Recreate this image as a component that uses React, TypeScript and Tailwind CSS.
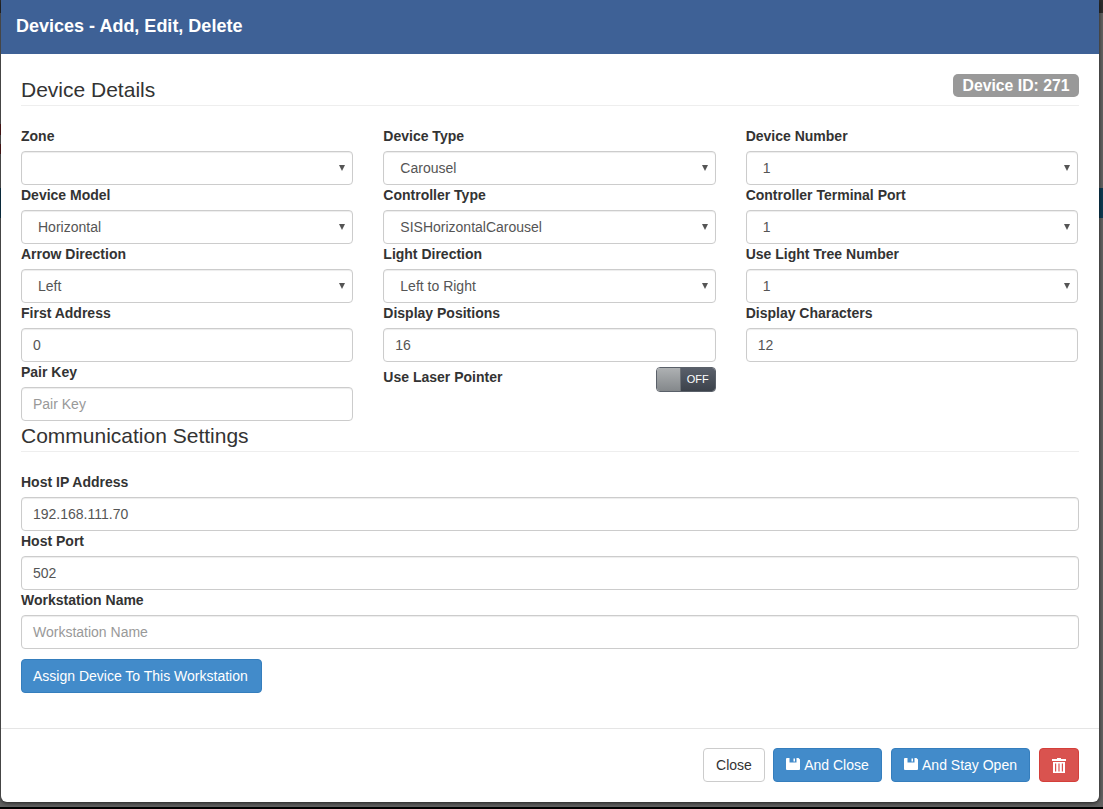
const labelCls = 'block h-[25px] text-[14px] font-bold leading-[20px] text-[#333]';
const controlCls =
  'flex h-[34px] w-full items-center rounded border border-[#ccc] bg-white text-[14px] text-[#555] shadow-[inset_0_1px_1px_rgba(0,0,0,0.075)]';

function SelectField({ label, value }: { label: string; value?: string }) {
  return (
    <div>
      <label className={labelCls}>{label}</label>
      <div className={`${controlCls} justify-between pl-4 pr-[7px]`}>
        <span>{value}</span>
        <svg width="6" height="6" viewBox="0 0 6 6" fill="#555">
          <path d="M0 0h6L3 6z" />
        </svg>
      </div>
    </div>
  );
}

function InputField({ label, value, placeholder }: { label: string; value?: string; placeholder?: string }) {
  return (
    <div>
      <label className={labelCls}>{label}</label>
      <div className={`${controlCls} pl-[11px] pr-3`}>
        {value ? <span>{value}</span> : <span className="text-[#999]">{placeholder}</span>}
      </div>
    </div>
  );
}

function FloppyIcon() {
  return (
    <svg width="14" height="12" viewBox="0 0 14 12" fill="currentColor" className="mb-[3px] shrink-0">
      <path d="M1 0h11.500L14 1.500V11a1 1 0 0 1-1 1H1a1 1 0 0 1-1-1V1a1 1 0 0 1 1-1zM3.500 0v4.500h7V0zM7.500 0.500v3H9v-3z" fillRule="evenodd" />
    </svg>
  );
}

function TrashIcon() {
  return (
    <svg width="14" height="15" viewBox="0 0 14 15" fill="currentColor">
      <path d="M5 0h4v1h5v2H0V1h5zM1 4h12v11H1zM3 5.500v8h1.200v-8zM6.400 5.500v8h1.200v-8zM9.800 5.500v8H11v-8z" fillRule="evenodd" />
    </svg>
  );
}

function App() {
  return (
    <div className="relative h-[809px] w-[1103px] overflow-hidden bg-[#626262] font-['Liberation_Sans',Arial,sans-serif]">
      {/* page behind the dialog, only its edges show */}
      <div className="absolute inset-x-0 top-0 h-[13px] bg-[#2e2e2e]" />
      <div className="absolute inset-x-0 top-[188px] h-[30px] bg-[#0d3b52]" />
      <div className="absolute left-0 top-[124px] h-[11px] w-px bg-[#5c1c1c]" />
      <div className="absolute left-0 top-[144px] h-[10px] w-px bg-[#5c1c1c]" />
      <div className="absolute inset-x-0 bottom-0 h-[2px] bg-black" />

      <div className="relative ml-px flex h-[802px] w-[1098px] flex-col overflow-hidden rounded-b-md bg-white shadow-[0_1px_4px_rgba(0,0,0,0.7)]">
        <div className="flex h-[54px] items-center bg-[#3e6196] pb-[2px] pl-[15px] text-[18px] font-bold text-white">
          Devices - Add, Edit, Delete
        </div>

        <div className="flex-1 px-5">
          <div className="mt-[20px] flex h-[32px] items-start justify-between border-b border-[#eee]">
            <h3 className="text-[21px] leading-[32px] text-[#333]">Device Details</h3>
            <span className="w-[126px] rounded-[5px] bg-[#999] text-center text-[15.75px] font-bold leading-[23px] text-white">
              Device ID: 271
            </span>
          </div>

          <div className="mt-[20px] grid grid-cols-3 gap-x-[30px] gap-y-0 pr-px">
            <SelectField label="Zone" />
            <SelectField label="Device Type" value="Carousel" />
            <SelectField label="Device Number" value="1" />
            <SelectField label="Device Model" value="Horizontal" />
            <SelectField label="Controller Type" value="SISHorizontalCarousel" />
            <SelectField label="Controller Terminal Port" value="1" />
            <SelectField label="Arrow Direction" value="Left" />
            <SelectField label="Light Direction" value="Left to Right" />
            <SelectField label="Use Light Tree Number" value="1" />
            <InputField label="First Address" value="0" />
            <InputField label="Display Positions" value="16" />
            <InputField label="Display Characters" value="12" />
            <InputField label="Pair Key" placeholder="Pair Key" />
            <div className="flex items-start justify-between pt-[5px]">
              <span className="text-[14px] font-bold leading-[20px] text-[#333]">Use Laser Pointer</span>
              <div className="flex h-[25px] w-[60px] overflow-hidden rounded border border-[#5a6069]">
                <span className="w-[24px] border-r border-[#6d7176] bg-gradient-to-b from-[#aeb1b3] to-[#84888b]" />
                <span className="flex flex-1 items-center justify-center bg-gradient-to-b from-[#5a606b] to-[#3c424b] text-[11px] text-white">
                  OFF
                </span>
              </div>
            </div>
          </div>

          <h3 className="h-[30px] text-[21px] leading-[30px] text-[#333]">Communication Settings</h3>
          <div className="border-b border-[#eee]" />

          <div className="mt-[20px] flex flex-col">
            <InputField label="Host IP Address" value="192.168.111.70" />
            <InputField label="Host Port" value="502" />
            <InputField label="Workstation Name" placeholder="Workstation Name" />
          </div>

          <button className="mt-[10px] h-[34px] w-[241px] rounded border border-[#357ebd] bg-[#428bca] pl-[11px] text-left text-[14px] text-white">
            Assign Device To This Workstation
          </button>
        </div>

        <div className="flex h-[74px] items-start justify-end gap-[9px] border-t border-[#e5e5e5] px-5 pt-[19px]">
          <button className="-mr-px h-[34px] w-[62px] rounded border border-[#ccc] bg-white text-[14px] text-[#333]">
            Close
          </button>
          <button className="flex h-[34px] w-[109px] items-center justify-center gap-1 rounded border border-[#357ebd] bg-[#428bca] text-[14px] text-white">
            <FloppyIcon />
            And Close
          </button>
          <button className="flex h-[34px] w-[139px] items-center justify-center gap-1 rounded border border-[#357ebd] bg-[#428bca] text-[14px] text-white">
            <FloppyIcon />
            And Stay Open
          </button>
          <button className="flex h-[34px] w-[40px] items-center justify-center rounded border border-[#d43f3a] bg-[#d9534f] text-white">
            <TrashIcon />
          </button>
        </div>
      </div>
    </div>
  );
}

export default App;
